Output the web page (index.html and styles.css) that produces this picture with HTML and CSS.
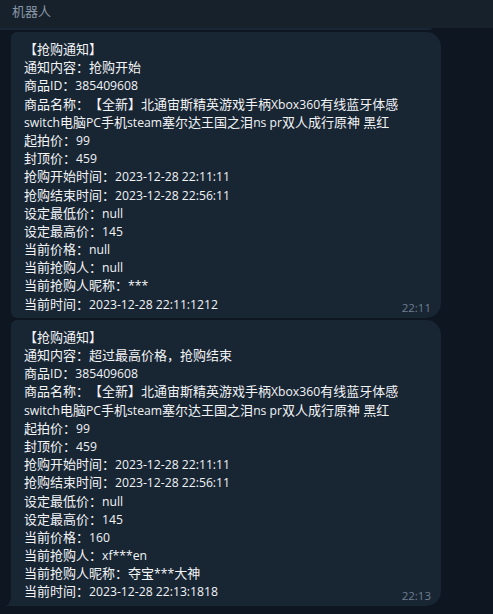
FILE: index.html
```html
<!DOCTYPE html>
<html lang="zh">
<head>
<meta charset="utf-8">
<title>机器人</title>
<link rel="stylesheet" href="styles.css">
</head>
<body>
<div class="app">
  <div class="header">机器人</div>
  <div class="chat">
    <div class="prev"></div>
    <div class="bubble first">
      <div class="ln">【抢购通知】</div>
      <div class="ln">通知内容：抢购开始</div>
      <div class="ln">商品<span class="l">ID</span>：<span class="l">385409608</span></div>
      <div class="ln">商品名称：【全新】北通宙斯精英游戏手柄<span class="l">Xbox360</span>有线蓝牙体感</div>
      <div class="ln"><span class="l">switch</span>电脑<span class="l">PC</span>手机<span class="l">steam</span>塞尔达王国之泪<span class="l">ns pr</span>双人成行原神<span class="l"> </span>黑红</div>
      <div class="ln">起拍价：<span class="l">99</span></div>
      <div class="ln">封顶价：<span class="l">459</span></div>
      <div class="ln">抢购开始时间：<span class="l">2023-12-28 22:11:11</span></div>
      <div class="ln">抢购结束时间：<span class="l">2023-12-28 22:56:11</span></div>
      <div class="ln">设定最低价：<span class="l">null</span></div>
      <div class="ln">设定最高价：<span class="l">145</span></div>
      <div class="ln">当前价格：<span class="l">null</span></div>
      <div class="ln">当前抢购人：<span class="l">null</span></div>
      <div class="ln">当前抢购人昵称：<span class="l">***</span></div>
      <div class="ln last"><span>当前时间：<span class="l">2023-12-28 22:11:1212</span></span><span class="time">22:11</span></div>
    </div>
    <div class="bubble tail">
      <div class="ln">【抢购通知】</div>
      <div class="ln">通知内容：超过最高价格，抢购结束</div>
      <div class="ln">商品<span class="l">ID</span>：<span class="l">385409608</span></div>
      <div class="ln">商品名称：【全新】北通宙斯精英游戏手柄<span class="l">Xbox360</span>有线蓝牙体感</div>
      <div class="ln"><span class="l">switch</span>电脑<span class="l">PC</span>手机<span class="l">steam</span>塞尔达王国之泪<span class="l">ns pr</span>双人成行原神<span class="l"> </span>黑红</div>
      <div class="ln">起拍价：<span class="l">99</span></div>
      <div class="ln">封顶价：<span class="l">459</span></div>
      <div class="ln">抢购开始时间：<span class="l">2023-12-28 22:11:11</span></div>
      <div class="ln">抢购结束时间：<span class="l">2023-12-28 22:56:11</span></div>
      <div class="ln">设定最低价：<span class="l">null</span></div>
      <div class="ln">设定最高价：<span class="l">145</span></div>
      <div class="ln">当前价格：<span class="l">160</span></div>
      <div class="ln">当前抢购人：<span class="l">xf***en</span></div>
      <div class="ln">当前抢购人昵称：夺宝<span class="l">***</span>大神</div>
      <div class="ln last"><span>当前时间：<span class="l">2023-12-28 22:13:1818</span></span><span class="time">22:13</span></div>
    </div>
  </div>
</div>
</body>
</html>
```

FILE: styles.css
```css
html, body {
  margin: 0;
  padding: 0;
}
body {
  background: #0e1621;
  width: 493px;
  height: 614px;
  overflow: hidden;
  font-family: "Open Sans", "Noto Sans CJK SC", sans-serif;
}
.app {
  display: flex;
  flex-direction: column;
  height: 614px;
}
.header {
  height: 28px;
  flex: none;
  box-sizing: border-box;
  background: #17212b;
  color: #8796a6;
  font-size: 13px;
  line-height: 20px;
  padding: 1px 0 0 12px;
  font-family: "Noto Sans CJK SC", sans-serif;
}
.chat {
  display: flex;
  flex-direction: column;
  gap: 2px;
  padding-left: 11px;
}
.prev {
  flex: none;
  height: 2px;
  width: 432px;
  margin-left: -11px;
  background: #1a2633;
  border-radius: 0 0 14px 0;
}
.bubble {
  flex: none;
  position: relative;
  width: 430px;
  box-sizing: border-box;
  background: #182533;
  color: #f2f4f6;
  font-size: 13px;
  line-height: 18.2px;
  padding: 8px 10px 5px 13px;
  border-radius: 6px 15px 15px 6px;
  text-spacing-trim: space-all;
}
.ln {
  white-space: nowrap;
  height: 18.2px;
}
.l {
  font-family: "Open Sans", sans-serif;
  font-size: 12.2px;
  line-height: 12px;
}
.last {
  display: flex;
  justify-content: space-between;
  align-items: flex-end;
}
.time {
  font-family: "Open Sans", sans-serif;
  font-size: 11.5px;
  color: #6d7f8f;
  line-height: 14px;
  margin-bottom: -2px;
}
.tail {
  border-radius: 6px 15px 15px 0;
}
.tail::before {
  content: "";
  position: absolute;
  left: -6px;
  bottom: 0;
  width: 6px;
  height: 10px;
  background: radial-gradient(ellipse 6px 10px at 0 0, transparent 96%, #182533 100%);
}
```
